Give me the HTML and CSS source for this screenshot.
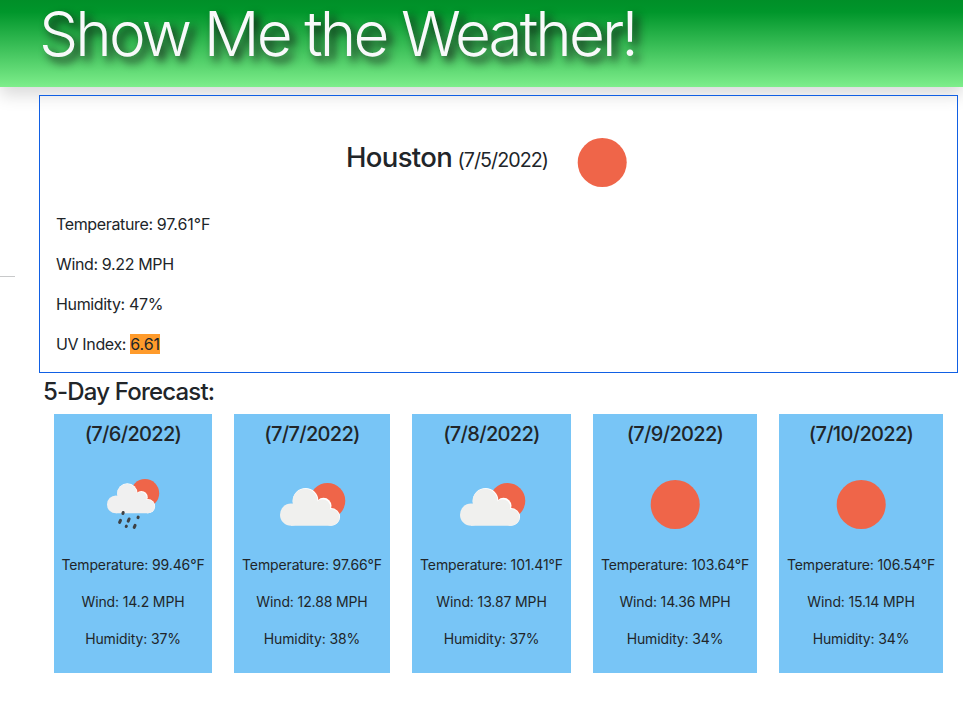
FILE: index.html
```html
<!DOCTYPE html>
<html lang="en">
<head>
<meta charset="utf-8">
<title>Show Me the Weather!</title>
<link rel="stylesheet" href="styles.css">
</head>
<body>
<svg class="defs" width="0" height="0" aria-hidden="true">
  <symbol id="sun" viewBox="0 0 100 100"><circle cx="50.2" cy="50.5" r="24.5" fill="#ef6549"/></symbol>
  <symbol id="cloudy" viewBox="0 0 100 100">
    <circle cx="65.5" cy="46.8" r="17.8" fill="#ef6549"/>
    <g fill="#fff"><circle cx="43.6" cy="46.8" r="12.8"/><circle cx="61.5" cy="51.8" r="8"/><circle cx="69.3" cy="62.9" r="8.8"/></g>
    <g fill="#f0f0ee"><circle cx="29.1" cy="60.7" r="11.1"/><circle cx="43" cy="47.3" r="12.5"/><circle cx="60.6" cy="52.8" r="7.6"/><circle cx="69" cy="63.4" r="8.4"/><path d="M29 50h31l9 8v13.8H29z"/></g>
  </symbol>
  <symbol id="rain" viewBox="0 0 100 100">
    <circle cx="62" cy="39.2" r="14.2" fill="#ef6549"/>
    <g fill="#fff"><circle cx="44.4" cy="39.4" r="10.1"/><circle cx="58.4" cy="43.2" r="6.3"/><circle cx="65" cy="52.2" r="7.1"/></g>
    <g fill="#f0f0f0"><circle cx="32.9" cy="50.4" r="8.9"/><circle cx="44" cy="39.7" r="10"/><circle cx="57.8" cy="43.9" r="6"/><circle cx="64.9" cy="52.5" r="6.8"/><path d="M33 42h25l7 6v11.3H33z"/></g>
    <path d="M40.2 58.5l-.3 1M37.5 66.3l-.9 2.1M46.1 65l-.9 2.1M55.2 63.1l-.2.5M43.4 72.2l-.2.3M52.1 71.3l-.9 2.1" fill="none" stroke="#3e4144" stroke-width="3" stroke-linecap="round"/>
  </symbol>
</svg>
<header class="banner"><h1>Show Me the Weather!</h1></header>
<div class="layout">
  <aside class="search"><hr></aside>
  <main>
    <section class="current">
      <div class="heading">
        <h2><span class="city">Houston</span> <small>(7/5/2022)</small></h2>
        <svg class="icon"><use href="#sun"/></svg>
      </div>
      <p>Temperature: <span class="value">97.61°F</span></p>
      <p>Wind: 9.22 MPH</p>
      <p>Humidity: 47%</p>
      <p>UV Index: <span class="value uv">6.61</span></p>
    </section>
    <h3>5-Day Forecast:</h3>
    <section class="forecast">
      <article class="card"><h4>(7/6/2022)</h4><svg class="icon"><use href="#rain"/></svg><p>Temperature: 99.46°F</p><p>Wind: 14.2 MPH</p><p>Humidity: 37%</p></article>
      <article class="card"><h4>(7/7/2022)</h4><svg class="icon"><use href="#cloudy"/></svg><p>Temperature: 97.66°F</p><p>Wind: 12.88 MPH</p><p>Humidity: 38%</p></article>
      <article class="card"><h4>(7/8/2022)</h4><svg class="icon"><use href="#cloudy"/></svg><p>Temperature: 101.41°F</p><p>Wind: 13.87 MPH</p><p>Humidity: 37%</p></article>
      <article class="card"><h4>(7/9/2022)</h4><svg class="icon"><use href="#sun"/></svg><p>Temperature: 103.64°F</p><p>Wind: 14.36 MPH</p><p>Humidity: 34%</p></article>
      <article class="card"><h4>(7/10/2022)</h4><svg class="icon"><use href="#sun"/></svg><p>Temperature: 106.54°F</p><p>Wind: 15.14 MPH</p><p>Humidity: 34%</p></article>
    </section>
  </main>
</div>
</body>
</html>
```
FILE: styles.css
```css
* { box-sizing: border-box; }
body { margin: 0; height: 717px; overflow: hidden; background: #fff; color: #212529; font: 16px/24px Inter, "Liberation Sans", sans-serif; }
h1, h2, h3, h4, p { margin: 0; font-weight: 500; white-space: nowrap; }
.defs { display: block; height: 0; }
.banner { height: 87px; padding-left: 39px; background: linear-gradient(#008f28 0, #00962b 12px, #7eee8b 87px); box-shadow: 0 8px 16px rgba(0, 0, 0, .15); }
h1 { color: #f8f9fa; font-size: 62px; line-height: 67px; font-weight: 350; letter-spacing: -2.9px; text-shadow: 5px 5px 10px #111; }
.layout { display: flex; padding: 8px 5px 0 0; }
.search { width: 39px; }
.search hr { width: 15px; margin: 181px 0 0; border: 0; border-top: 1px solid #c8c9ca; }
main { flex: 1; }
.current { height: 278px; padding: 16px; border: 1px solid #1160e4; }
.heading { display: flex; align-items: center; height: 100px; padding-left: 290px; }
h2 { width: 206px; line-height: 34px; padding-bottom: 8px; font-size: 27.5px; }
.city { letter-spacing: -.65px; }
h2 small { font-size: 19.7px; font-weight: 400; letter-spacing: -.95px; margin-left: -2px; }
.icon { display: block; width: 100px; height: 100px; flex: none; }
.current p { font-weight: 400; letter-spacing: -.36px; margin-bottom: 16px; }
.current .value { letter-spacing: -.05px; }
.uv { background: #ff9b2b; }
h3 { margin: 4px 0 7px 4px; font-size: 24px; line-height: 30px; letter-spacing: -.82px; }
.forecast { display: grid; grid-template-columns: 158px 156px 159px 164px 164px; column-gap: 22px; margin-left: 15px; }
.card { height: 259px; padding-top: 8px; display: flex; flex-direction: column; align-items: center; background: #78c5f6; }
.card h4 { font-size: 20px; line-height: 24px; letter-spacing: -.68px; margin-bottom: 8px; }
.card p { font-size: 14px; line-height: 21px; font-weight: 400; margin-bottom: 16px; letter-spacing: -.13px; }
```
